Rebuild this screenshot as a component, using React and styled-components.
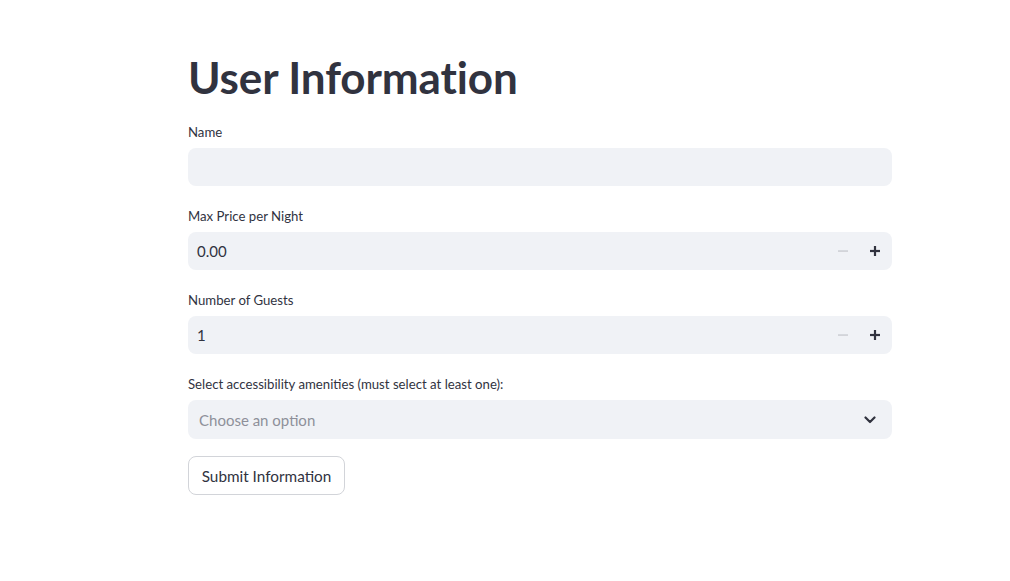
import React from 'react';
import styled, { createGlobalStyle } from 'styled-components';

const GlobalStyle = createGlobalStyle`
  html, body {
    margin: 0;
    padding: 0;
    background: #ffffff;
    font-family: Lato, "Noto Sans", sans-serif;
    color: #31333f;
  }
`

const Page = styled.div`
  width: 1010px;
  height: 581px;
  box-sizing: border-box;
  padding: 50px 0 0 188px;
`

const Column = styled.div`
  width: 704px;
  display: flex;
  flex-direction: column;
`

const Title = styled.h1`
  margin: 0 0 20px;
  font-size: 44px;
  font-weight: 700;
  line-height: 54px;
  letter-spacing: -0.1px;
  color: #31333f;
`

const Field = styled.div`
  display: flex;
  flex-direction: column;
  margin-bottom: 22px;
`

const Label = styled.label`
  font-size: 13.2px;
  line-height: 16px;
  margin-bottom: 8px;
  color: #31333f;
`

const InputBox = styled.div`
  display: flex;
  align-items: center;
  height: ${p => p.$h}px;
  background: #f0f2f6;
  border-radius: 8px;
  padding: 0 ${p => p.$pad}px 0 ${p => p.$padLeft}px;
  box-sizing: border-box;
  font-size: 15px;
  color: ${p => p.$placeholder ? '#8e909a' : '#31333f'};
`

const Value = styled.span`
  flex: 1;
`

const StepButton = styled.span`
  width: 32px;
  display: flex;
  align-items: center;
  justify-content: center;
  color: ${p => p.$disabled ? '#c6c8cd' : '#31333f'};
`

const SubmitButton = styled.button`
  align-self: flex-start;
  margin-top: -5px;
  width: 157px;
  height: 39px;
  background: #ffffff;
  border: 1px solid #d2d4d9;
  border-radius: 8px;
  font-family: Lato, "Noto Sans", sans-serif;
  font-size: 15.3px;
  color: #31333f;
  padding: 0;
`

function Minus() {
  return (
    <svg width="10" height="10" viewBox="0 0 10 10">
      <rect x="0" y="4.4" width="10" height="1.3" fill="currentColor" />
    </svg>
  )
}

function Plus() {
  return (
    <svg width="10" height="10" viewBox="0 0 10 10">
      <rect x="0" y="3.9" width="10" height="2.2" fill="currentColor" />
      <rect x="3.9" y="0" width="2.2" height="10" fill="currentColor" />
    </svg>
  )
}

function Chevron() {
  return (
    <svg width="12" height="8" viewBox="0 0 12 8">
      <path d="M1.5 1.5 L6 6 L10.5 1.5" fill="none" stroke="#31333f" strokeWidth="2.2" strokeLinecap="round" strokeLinejoin="round" />
    </svg>
  )
}

function NumberField({ label, value }) {
  return (
    <Field>
      <Label>{label}</Label>
      <InputBox $h={38} $pad={1} $padLeft={9}>
        <Value>{value}</Value>
        <StepButton $disabled><Minus /></StepButton>
        <StepButton><Plus /></StepButton>
      </InputBox>
    </Field>
  )
}

export default function App() {
  return (
    <Page>
      <GlobalStyle />
      <Column>
        <Title>User Information</Title>
        <Field>
          <Label>Name</Label>
          <InputBox $h={38} $pad={12} $padLeft={12} />
        </Field>
        <NumberField label="Max Price per Night" value="0.00" />
        <NumberField label="Number of Guests" value="1" />
        <Field>
          <Label>Select accessibility amenities (must select at least one):</Label>
          <InputBox $h={39} $pad={16} $padLeft={11} $placeholder>
            <Value>Choose an option</Value>
            <Chevron />
          </InputBox>
        </Field>
        <SubmitButton>Submit Information</SubmitButton>
      </Column>
    </Page>
  )
}
